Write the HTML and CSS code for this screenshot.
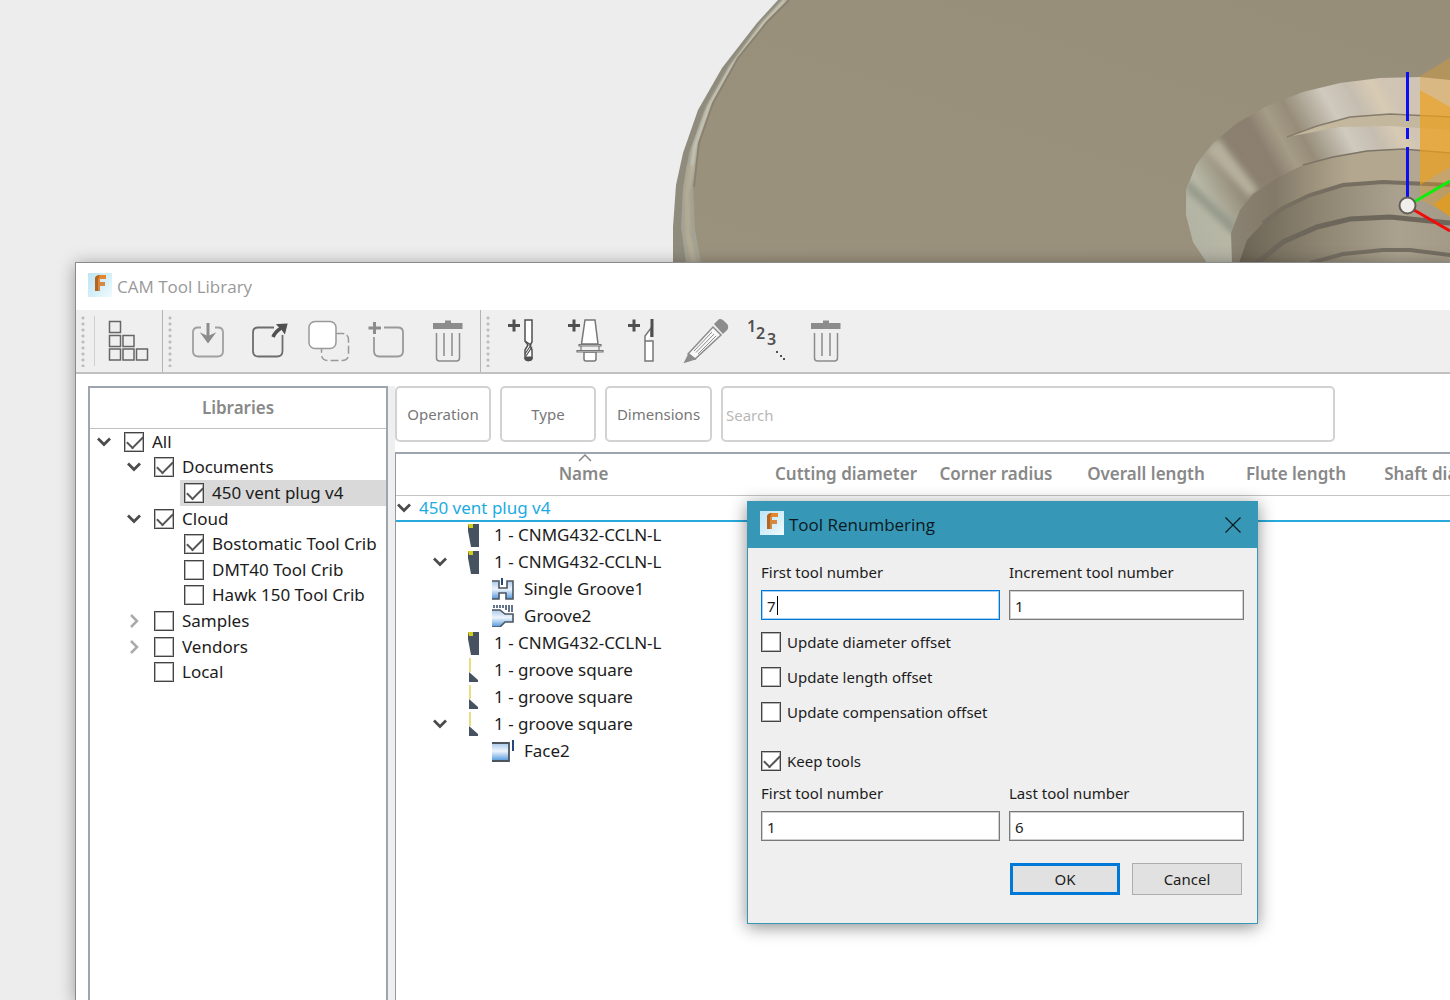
FILE: index.html
```html
<!DOCTYPE html>
<html lang="en">
<head>
<meta charset="utf-8">
<meta name="viewport" content="width=device-width, initial-scale=1">
<title>CAM Tool Library</title>
<link rel="stylesheet" href="styles.css">
</head>
<body>
<svg class="defs" width="0" height="0" aria-hidden="true">
  <defs>
    <linearGradient id="steel" x1="0" y1="0" x2="0" y2="1"><stop offset="0" stop-color="#a9c8ea"/><stop offset=".45" stop-color="#eef5fc"/><stop offset="1" stop-color="#4f97dc"/></linearGradient>
    <linearGradient id="tile" x1="0" y1="0" x2="1" y2="1"><stop offset="0" stop-color="#bfe5f5"/><stop offset=".6" stop-color="#d8f0f9"/><stop offset="1" stop-color="#f2fbfe"/></linearGradient>
    <linearGradient id="fgrad" x1="0" y1="0" x2="0" y2="1"><stop offset="0" stop-color="#e8862a"/><stop offset="1" stop-color="#c98a50"/></linearGradient>
    <symbol id="app" viewBox="0 0 24 24"><rect width="24" height="24" fill="url(#tile)"/><path d="M7 5Q8 2 12 2H18V6H12V9H17V13H12V18H7Z" fill="url(#fgrad)"/><path d="M7 5Q8 2 12 2H12L10 6V18H7Z" fill="#b5651f"/></symbol>
    <symbol id="down" viewBox="0 0 16 16"><path d="M2 4.500 8 10.500 14 4.500" fill="none" stroke="currentColor" stroke-width="2.800"/></symbol>
    <symbol id="right" viewBox="0 0 16 16"><path d="M5 2 11 8 5 14" fill="none" stroke="currentColor" stroke-width="2.500"/></symbol>
    <symbol id="trash" viewBox="0 0 48 48"><path d="M9 6H21V3.500H27V6H38.500V12H9Z" fill="#8c8c8c"/><path d="M12.500 16V41Q12.500 44 15.500 44H32.500Q35.500 44 35.500 41V16M20 16V39M28 16V39" fill="none" stroke="#8c8c8c" stroke-width="1.500"/></symbol>
    <symbol id="insert" viewBox="0 0 14 24"><path d="M2 1H13V24H5L2 8Z" fill="#46525f"/><path d="M2 1H7V5H3Z" fill="#d3cc1a"/></symbol>
    <symbol id="square" viewBox="0 0 14 24"><path d="M3 0H5V14H3Z" fill="#e6e080"/><path d="M3 14 12 22V24H3Z" fill="#46525f"/></symbol>
  </defs>
</svg>

<main class="desktop">
  <svg class="scene" viewBox="0 0 1450 263" preserveAspectRatio="xMinYMin slice" role="img" aria-label="Part model">
    <defs>
      <filter id="soft" x="-20%" y="-20%" width="140%" height="140%"><feGaussianBlur stdDeviation="3"/></filter>
      <filter id="sheen" x="-20%" y="-20%" width="140%" height="140%"><feGaussianBlur stdDeviation="1"/></filter>
      <linearGradient id="face" x1="0" y1="1" x2="1" y2="0"><stop offset="0" stop-color="#9b927e"/><stop offset="1" stop-color="#978e7a"/></linearGradient>
      <linearGradient id="cone" gradientUnits="userSpaceOnUse" x1="1186" y1="230" x2="1400" y2="110"><stop offset="0" stop-color="#b2b3a4"/><stop offset=".14" stop-color="#b7b7a5"/><stop offset=".3" stop-color="#8c8170"/><stop offset=".44" stop-color="#8b8070"/><stop offset=".52" stop-color="#a59c87"/><stop offset=".6" stop-color="#968c79"/><stop offset=".76" stop-color="#cfcabe"/><stop offset=".86" stop-color="#c5bdb0"/><stop offset=".95" stop-color="#d8cbb4"/><stop offset="1" stop-color="#d0c4b4"/></linearGradient>
      <linearGradient id="bore" gradientUnits="userSpaceOnUse" x1="1231" y1="0" x2="1450" y2="0"><stop offset="0" stop-color="#8a8272"/><stop offset=".2" stop-color="#837969"/><stop offset=".4" stop-color="#a0967f"/><stop offset=".55" stop-color="#b3a78f"/><stop offset="1" stop-color="#b3a792"/></linearGradient>
      <linearGradient id="deep" gradientUnits="userSpaceOnUse" x1="1240" y1="0" x2="1450" y2="0"><stop offset="0" stop-color="#6c6455"/><stop offset=".4" stop-color="#8f8673"/><stop offset=".75" stop-color="#aaa28e"/><stop offset="1" stop-color="#a39a87"/></linearGradient>
      <clipPath id="coneclip"><path d="M1207 263 1193 242 1186 215V190L1196 165 1213 143 1237 123 1265 107 1303 92 1340 83 1380 78 1420 77 1450 80V263Z"/></clipPath>
    </defs>
    <path d="M778 0 757 23 722 68 698 110 683 153 676 185 673 227V263H1450V0Z" fill="#8f8b7d"/>
    <path d="M783 0 761 24 728 68 704 112 689 153 683 187 681 227 686 263H1450V0Z" fill="#a3a292"/>
    <g filter="url(#sheen)">
      <path d="M785 0 763 24 732 66 709 106 695 146 688 190" fill="none" stroke="#c4c3b3" stroke-width="4"/>
      <path d="M690 165 687 195 688 235 694 263" fill="none" stroke="#b3aa94" stroke-width="5"/>
    </g>
    <path d="M790 0 767 22 738 58 713 103 699 143 693 187 695 230 701 263H1450V0Z" fill="url(#face)"/>
    <path d="M789 0 767 22 738 58 713 103 699 143 694 187" fill="none" stroke="#8b8170" stroke-width="2"/>
    <g clip-path="url(#coneclip)">
      <rect x="1180" y="70" width="270" height="193" fill="url(#cone)"/>
      <g filter="url(#soft)">
        <path d="M1186 178 1238 226 1234 236 1186 190Z" fill="#949989"/>
        <path d="M1205 150 1250 198 1258 190 1218 138Z" fill="#b5b09c"/>
      </g>
      <path d="M1287 137 1317 126 1350 117 1390 114 1450 117V130L1390 126 1340 127Z" fill="#c3b79e"/>
      <path d="M1287 137 1317 126 1350 117 1390 114 1450 117" fill="none" stroke="#857c6c" stroke-width="1.500"/>
    </g>
    <path d="M1232 263 1231 233 1240 210 1253 194 1277 178 1303 165 1333 157 1367 151 1403 149 1450 153V263Z" fill="url(#bore)"/>
    <path d="M1303 165 1333 157 1367 151 1403 149 1450 153" fill="none" stroke="#7c7466" stroke-width="1.500"/>
    <path d="M1239 263 1247 240 1263 223 1283 208 1310 195 1343 185 1383 181 1450 184V263Z" fill="url(#deep)"/>
    <path d="M1263 223 1283 208 1310 195 1343 185 1383 182 1450 185" fill="none" stroke="#766e61" stroke-width="4"/>
    <path d="M1257 263 1283 242 1317 227 1350 219 1390 217 1450 223" fill="none" stroke="#6d665a" stroke-width="5"/>
    <path d="M1310 263 1343 254 1383 250 1410 250 1450 255" fill="none" stroke="#756e62" stroke-width="4"/>
    <path d="M1420 76 1450 58V213L1420 200Z" fill="#f0a020" opacity=".32"/>
    <path d="M1420 90 1450 107V167L1420 185Z" fill="#eda018" opacity=".58"/>
    <path d="M1433 205 1450 192V217Z" fill="#e29c20" opacity=".85"/>
    <path d="M1407.500 72V121M1407.500 128V139M1407.500 147V198" stroke="#0d0df2" stroke-width="3"/>
    <path d="M1414 202 1450 181" stroke="#0bf00b" stroke-width="3"/>
    <path d="M1414 210 1450 231" stroke="#f20b0b" stroke-width="3"/>
    <circle cx="1407.500" cy="205.500" r="8" fill="#efeeea" stroke="#625e57" stroke-width="2"/>
  </svg>

  <section class="window" aria-label="CAM Tool Library">
    <header class="titlebar">
      <svg class="app-icon"><use href="#app"/></svg>
      <h1 class="window-title">CAM Tool Library</h1>
    </header>

    <div class="toolbar" role="toolbar" aria-label="Library tools">
      <div class="group">
        <span class="grip"></span><span class="rule"></span>
        <button class="tool" aria-label="Show libraries"><svg viewBox="0 0 48 48" fill="none" stroke="#666" stroke-width="1.500"><rect x="5.500" y="4.500" width="11" height="11"/><rect x="5.500" y="18.500" width="11" height="11"/><rect x="19" y="18.500" width="11" height="11"/><rect x="5.500" y="32" width="11" height="11"/><rect x="19" y="32" width="11" height="11"/><rect x="32.500" y="32" width="11" height="11"/></svg></button>
      </div>
      <div class="group">
        <span class="grip"></span>
        <button class="tool" aria-label="Import"><svg viewBox="0 0 48 48" fill="none" stroke="#a0a0a0" stroke-width="1.800"><path d="M17 10.500H14Q9 10.500 9 15.500V34Q9 39.500 14.500 39.500H33.500Q39 39.500 39 34V15.500Q39 10.500 34 10.500H31"/><path d="M24 6V19" stroke="#8c8c8c" stroke-width="3"/><path d="M18.500 17.500 24 20 29.500 17.500 24 25Z" fill="#8c8c8c" stroke="#8c8c8c"/></svg></button>
        <button class="tool" aria-label="Export"><svg viewBox="0 0 48 48" fill="none" stroke="#6d6d6d" stroke-width="1.800"><path d="M30 10.500H14Q9 10.500 9 15.500V34Q9 39.500 14.500 39.500H33Q38.500 39.500 38.500 34V18"/><path d="M29 20Q31 15 37 11" stroke="#505050" stroke-width="3.500"/><path d="M34 8 42.500 7.500 40.500 15.500 38 12Z" fill="#505050" stroke="#505050"/></svg></button>
        <button class="tool" aria-label="Copy"><svg viewBox="0 0 48 48" stroke="#999" stroke-width="1.500"><path d="M32 16.500H38Q44.500 16.500 44.500 23V37Q44.500 43.500 38 43.500H24Q17.500 43.500 17.500 37V31" fill="none" stroke-dasharray="8 3"/><rect x="5" y="4.500" width="27" height="27" rx="6" fill="#fff"/></svg></button>
        <button class="tool" aria-label="New library"><svg viewBox="0 0 48 48" fill="none" stroke="#999" stroke-width="1.800"><path d="M20 10.500H34Q39 10.500 39 15.500V34Q39 39.500 33.500 39.500H15.500Q10 39.500 10 34V20"/><path d="M4.500 11H17M10.500 5V17" stroke="#8c8c8c" stroke-width="3"/></svg></button>
        <button class="tool" aria-label="Delete library"><svg><use href="#trash"/></svg></button>
      </div>
      <div class="group">
        <span class="grip"></span>
        <button class="tool" aria-label="New mill tool"><svg viewBox="0 0 48 48" fill="none" stroke="#505050"><path d="M6 8.500H18M12 2.500V14.500" stroke-width="3"/><path d="M23 3H30V25L28 28 30 33V41Q30 43.500 26.500 43.500T23 41V33L26 28 23 24Z" fill="#fff" stroke-width="1.500"/><path d="M23 24 29 28 23 37M30 30 24 39" stroke-width="1.200"/><path d="M23 40H30V42L26 44 23 42Z" fill="#505050"/></svg></button>
        <button class="tool" aria-label="New holder"><svg viewBox="0 0 48 48" stroke="#777"><path d="M6 8.500H18M12 2.500V14.500" stroke="#505050" stroke-width="3"/><path d="M23 3H33L36 27H19.500Z" fill="#fff" stroke-width="1.500"/><path d="M22 35H34V42Q34 44 32 44H24Q22 44 22 42Z" fill="#fff" stroke-width="1.500"/><path d="M17 27.500H39V29H17ZM15 33.500H41V35H15ZM19 29V33M37 29V33" fill="#ddd" stroke-width="1.200"/></svg></button>
        <button class="tool" aria-label="New turning tool"><svg viewBox="0 0 48 48" stroke="#777"><path d="M6 8.500H18M12 2.500V14.500" stroke="#505050" stroke-width="3"/><path d="M23 24H31V44H23ZM23 24V19L29 11V20" fill="#fff" stroke-width="1.500"/><path d="M30 2V20" stroke="#505050" stroke-width="3"/></svg></button>
        <button class="tool" aria-label="Edit tool"><svg viewBox="0 0 48 48" fill="none" stroke="#8c8c8c" stroke-width="1.500"><path d="M6 37 31 10 39 18 13 42Z" fill="#f8f8f8"/><path d="M12 34 30 15M16 37 34 19M14 35.500 32 17" stroke-width="1"/><path d="M33 7 37 3Q39 2 41 4L45 8Q46 10 45 12L41 16Z" fill="#8c8c8c"/><path d="M7 37 13 42 3 45Z" fill="#8c8c8c"/></svg></button>
        <button class="tool" aria-label="Renumber tools"><svg viewBox="0 0 48 48"><g class="digits"><text x="5" y="15">1</text><text x="14" y="22">2</text><text x="25" y="28">3</text></g><path d="M34 34h2v2h-2zM38 38h2v2h-2zM41 41h2v2h-2z" fill="#505050"/></svg></button>
        <button class="tool" aria-label="Delete tool"><svg><use href="#trash"/></svg></button>
      </div>
    </div>

    <div class="content">
      <aside class="libraries">
        <h2 class="panel-title">Libraries</h2>
        <ul class="tree">
          <li class="row"><svg class="chev"><use href="#down"/></svg><label class="pick"><input type="checkbox" class="check" checked>All</label></li>
          <li class="row l1"><svg class="chev"><use href="#down"/></svg><label class="pick"><input type="checkbox" class="check" checked>Documents</label></li>
          <li class="row l2"><label class="pick selected"><input type="checkbox" class="check" checked>450 vent plug v4</label></li>
          <li class="row l1"><svg class="chev"><use href="#down"/></svg><label class="pick"><input type="checkbox" class="check" checked>Cloud</label></li>
          <li class="row l2"><label class="pick"><input type="checkbox" class="check" checked>Bostomatic Tool Crib</label></li>
          <li class="row l2"><label class="pick"><input type="checkbox" class="check">DMT40 Tool Crib</label></li>
          <li class="row l2"><label class="pick"><input type="checkbox" class="check">Hawk 150 Tool Crib</label></li>
          <li class="row l1"><svg class="chev faint"><use href="#right"/></svg><label class="pick"><input type="checkbox" class="check">Samples</label></li>
          <li class="row l1"><svg class="chev faint"><use href="#right"/></svg><label class="pick"><input type="checkbox" class="check">Vendors</label></li>
          <li class="row l1"><span class="chev"></span><label class="pick"><input type="checkbox" class="check">Local</label></li>
        </ul>
      </aside>

      <div class="tools">
        <div class="filters">
          <button class="filter">Operation</button>
          <button class="filter">Type</button>
          <button class="filter wide">Dimensions</button>
          <input class="search" type="search" placeholder="Search" aria-label="Search">
        </div>
        <div class="table-box">
          <table class="table">
            <colgroup><col class="c-name"><col class="c-std"><col class="c-std"><col class="c-std"><col class="c-std"><col class="c-std"></colgroup>
            <thead>
              <tr><th class="sorted">Name<svg class="sort" viewBox="0 0 14 8"><path d="M1 7 7 1 13 7" fill="none" stroke="#888" stroke-width="1.500"/></svg></th><th>Cutting diameter</th><th>Corner radius</th><th>Overall length</th><th>Flute length</th><th>Shaft diameter</th></tr>
            </thead>
            <tbody>
              <tr class="doc"><td colspan="6"><div class="cell"><svg class="chev"><use href="#down"/></svg>450 vent plug v4</div></td></tr>
              <tr><td colspan="6"><div class="cell item"><span class="chev"></span><svg class="kind"><use href="#insert"/></svg>1 - CNMG432-CCLN-L</div></td></tr>
              <tr><td colspan="6"><div class="cell item"><svg class="chev"><use href="#down"/></svg><svg class="kind"><use href="#insert"/></svg>1 - CNMG432-CCLN-L</div></td></tr>
              <tr><td colspan="6"><div class="cell op"><svg class="op-icon" viewBox="0 0 22 22"><path d="M0 3H7V10H15V3H21V21H14V15H7V21H0" fill="url(#steel)" stroke="#4d555e" stroke-width="1.600"/><path d="M10 0V7" stroke="#24487c" stroke-width="2"/></svg>Single Groove1</div></td></tr>
              <tr><td colspan="6"><div class="cell op"><svg class="op-icon" viewBox="0 0 22 22"><path d="M0 5H8L13 9H21V17H13L8 22H0" fill="url(#steel)" stroke="#4d555e" stroke-width="1.600"/><path d="M2 0V3M5 0V3M8 0V3M11 0V3M14 0V5M17 0V7M20 0V7" stroke="#2f4564" stroke-width="1.500"/></svg>Groove2</div></td></tr>
              <tr><td colspan="6"><div class="cell item"><span class="chev"></span><svg class="kind"><use href="#insert"/></svg>1 - CNMG432-CCLN-L</div></td></tr>
              <tr><td colspan="6"><div class="cell item"><span class="chev"></span><svg class="kind"><use href="#square"/></svg>1 - groove square</div></td></tr>
              <tr><td colspan="6"><div class="cell item"><span class="chev"></span><svg class="kind"><use href="#square"/></svg>1 - groove square</div></td></tr>
              <tr><td colspan="6"><div class="cell item"><svg class="chev"><use href="#down"/></svg><svg class="kind"><use href="#square"/></svg>1 - groove square</div></td></tr>
              <tr><td colspan="6"><div class="cell op"><svg class="op-icon" viewBox="0 0 22 22"><path d="M0 3H17V21H0" fill="url(#steel)" stroke="#4d555e" stroke-width="1.800"/><path d="M21 0V11" stroke="#24487c" stroke-width="2"/></svg>Face2</div></td></tr>
            </tbody>
          </table>
        </div>
      </div>
    </div>
  </section>

  <form class="dialog" role="dialog" aria-labelledby="dlg-title">
    <header class="dialog-bar">
      <svg class="app-icon"><use href="#app"/></svg>
      <h2 class="window-title" id="dlg-title">Tool Renumbering</h2>
      <button type="button" class="close" aria-label="Close"><svg viewBox="0 0 16 16"><path d="M.5.500 15.500 15.500M15.500.500.500 15.500" stroke="#0a1a20" stroke-width="1.200"/></svg></button>
    </header>
    <div class="dialog-body">
      <div class="fields">
        <div class="field"><label for="first">First tool number</label><div class="entry"><input id="first" class="text active" type="text" value="7"><span class="caret"></span></div></div>
        <div class="field"><label for="step">Increment tool number</label><input id="step" class="text" type="text" value="1"></div>
      </div>
      <div class="options">
        <label class="option"><input type="checkbox" class="check">Update diameter offset</label>
        <label class="option"><input type="checkbox" class="check">Update length offset</label>
        <label class="option"><input type="checkbox" class="check">Update compensation offset</label>
      </div>
      <label class="option keep"><input type="checkbox" class="check" checked>Keep tools</label>
      <div class="fields">
        <div class="field"><label for="kfirst">First tool number</label><input id="kfirst" class="text" type="text" value="1"></div>
        <div class="field"><label for="klast">Last tool number</label><input id="klast" class="text" type="text" value="6"></div>
      </div>
      <div class="actions">
        <button type="button" class="btn primary">OK</button>
        <button type="button" class="btn">Cancel</button>
      </div>
    </div>
  </form>
</main>
</body>
</html>
```
FILE: styles.css
```css
* { box-sizing: border-box; }

body {
  margin: 0;
  background: #ededed;
  color: #1c1c1c;
  font: 17px/24px "Noto Sans", "Open Sans", sans-serif;
}

button, input { font: inherit; color: inherit; }
h1, h2, ul { margin: 0; padding: 0; }
.defs { position: absolute; }

/* Canvas with floating windows */
.desktop {
  position: relative;
  min-height: 100vh;
  overflow: hidden;
}

.scene {
  position: absolute;
  top: 0;
  left: 0;
  width: 100%;
  height: 263px;
}

.window {
  position: absolute;
  inset: 262px -2px -2px 75px;
  display: flex;
  flex-direction: column;
  background: #fff;
  border: 1px solid #8a8a8a;
  box-shadow: 0 2px 16px rgba(0, 0, 0, 0.35);
}

.titlebar {
  display: flex;
  align-items: center;
  gap: 5px;
  height: 47px;
  padding-left: 12px;
  color: #999;
}

.app-icon { width: 24px; height: 24px; margin-bottom: 4px; }
.window-title { font-size: 17px; font-weight: 400; font-family: "Open Sans", "Noto Sans", sans-serif; }

/* Toolbar */
.toolbar {
  display: flex;
  height: 64px;
  background: #efefef;
  border-bottom: 2px solid #c0c0c0;
}

.group {
  display: flex;
  align-items: center;
  padding: 0 2px 0 5px;
  border-right: 1px solid #b4b4b4;
}
.group:first-child { padding-right: 4px; }
.group:last-child { border-right: 0; }

.grip {
  width: 4px;
  height: 52px;
  margin-right: 6px;
  background: radial-gradient(circle, #bcbcbc 0 1px, transparent 2px) 0 0 / 4px 6px;
}
.rule { width: 1px; height: 50px; margin: 0 3px; background: #cfcfcf; }

.tool {
  display: grid;
  place-items: center;
  width: 60px;
  height: 60px;
  padding: 0;
  border: 0;
  background: none;
}
.tool svg { width: 48px; height: 48px; overflow: visible; }
.digits { font: 600 16px "Noto Sans", sans-serif; fill: #505050; }

/* Library tree */
.content {
  display: flex;
  flex: 1;
  padding: 12px 0 0 12px;
}

.libraries {
  width: 300px;
  flex: none;
  border: 2px solid #9fa5ae;
  border-bottom: 0;
}

.panel-title {
  height: 41px;
  border-bottom: 1px solid #c0c0c0;
  color: #888;
  font-size: 17px;
  font-weight: 600;
  line-height: 40px;
  text-align: center;
}

.tree {
  display: grid;
  grid-template-rows: repeat(10, minmax(0, 1fr));
  height: 256px;
  list-style: none;
}
.row { display: flex; align-items: center; padding-left: 6px; }
.row.l1 { padding-left: 36px; }
.row.l2 { padding-left: 90px; }

.chev { width: 16px; height: 16px; flex: none; color: #4c4c4c; }
.chev.faint { color: #aaa; }
.row .chev { margin-right: 8px; }

.pick {
  display: flex;
  flex: 1;
  align-items: center;
  gap: 8px;
  height: 100%;
  padding-left: 4px;
  white-space: nowrap;
}
.selected { background: #d9d9d9; }

.check {
  position: relative;
  width: 20px;
  height: 20px;
  margin: 0;
  flex: none;
  appearance: none;
  background: #fff;
  border: 1px solid #444;
  box-shadow: inset 0 0 0 1px #b5b5b5;
}
.check:checked::after {
  content: "";
  position: absolute;
  top: 3px;
  left: 2px;
  width: 14px;
  height: 7px;
  border: solid #555;
  border-width: 0 0 2px 2px;
  transform: rotate(-45deg);
}

/* Tool list */
.tools {
  display: flex;
  flex: 1;
  flex-direction: column;
  gap: 10px;
  min-width: 0;
  border-left: 7px solid #efefef;
}

.filters { display: flex; gap: 9px; height: 56px; }
.filter, .search {
  border: 2px solid #d2d2d2;
  border-radius: 5px;
  background: #fff;
  font-size: 15px;
}
.filter { width: 96px; padding: 0; color: #777; }
.filter.wide { width: 107px; }
.search { flex: 1; max-width: 614px; padding: 2px 3px 0; appearance: none; }
.search::placeholder { color: #b8b8b8; opacity: 1; }

.table-box {
  flex: 1;
  overflow: hidden;
  border-top: 2px solid #9fa5ae;
  border-left: 1px solid #9299a3;
}

.table { width: 1125px; table-layout: fixed; border-collapse: collapse; }
.c-name { width: 375px; }
.c-std { width: 150px; }

.table th {
  position: relative;
  height: 41px;
  padding: 0;
  border-bottom: 1px solid #c4c4c4;
  color: #888;
  font-weight: 600;
  white-space: nowrap;
}
.sort { position: absolute; top: 0; left: 50%; width: 14px; height: 8px; margin-left: -6px; }

.table td { padding: 0; }
.cell { display: flex; align-items: center; height: 27px; }
.doc .cell { height: 24px; gap: 7px; color: #1cabe2; }
.doc td { border-bottom: 2px solid #28aadc; }
.item { padding-left: 36px; }
.kind { width: 14px; height: 24px; margin: 0 14px 0 18px; }
.op { gap: 10px; padding-left: 96px; }
.op-icon { width: 22px; height: 22px; }

/* Renumbering dialog */
.dialog {
  position: absolute;
  top: 501px;
  left: 747px;
  width: 511px;
  background: #efefef;
  border: 1px solid #3797b7;
  box-shadow: 0 3px 16px rgba(0, 0, 0, 0.45);
  font-size: 15px;
}

.dialog-bar {
  display: flex;
  align-items: center;
  gap: 5px;
  height: 46px;
  padding: 0 16px 0 12px;
  background: #3797b7;
  color: #0a1a20;
}

.close { width: 16px; height: 16px; margin-left: auto; padding: 0; border: 0; background: none; }
.close svg { display: block; }

.dialog-body { padding: 12px 13px 28px; }
.fields { display: grid; grid-template-columns: 239px 1fr; gap: 9px; }
.field { display: flex; flex-direction: column; gap: 6px; }
.entry { position: relative; }

.text {
  width: 100%;
  height: 30px;
  padding: 2px 5px 0;
  background: #fff;
  border: 1px solid #7a7a7a;
  box-shadow: inset 0 0 0 1px #cfcfcf;
}
.text.active { border-color: #0078d7; box-shadow: inset 0 0 0 1px #a6d0f2; }
.caret { position: absolute; top: 6px; left: 16px; width: 1px; height: 19px; background: #000; }

.options { display: grid; gap: 11px; padding-top: 10px; }
.option { display: flex; align-items: center; gap: 6px; }
.keep { padding: 25px 0 8px; }

.actions { display: flex; justify-content: flex-end; gap: 12px; padding: 22px 2px 0 0; }
.btn {
  width: 110px;
  height: 32px;
  padding: 0;
  background: #e1e1e1;
  border: 1px solid #adadad;
}
.btn.primary { border: 3px solid #0078d7; }
```
